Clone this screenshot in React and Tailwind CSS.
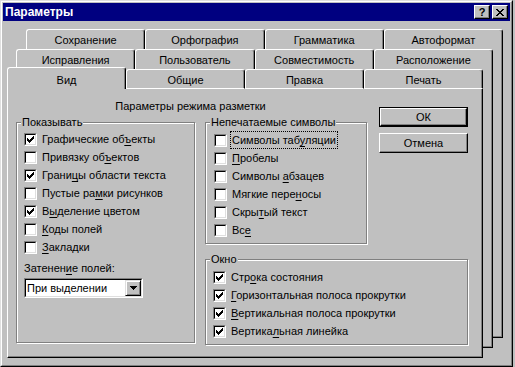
import React from "react";

function Mn({ text }) {
  const i = text.indexOf("&");
  if (i < 0) return <>{text}</>;
  return (
    <>
      {text.slice(0, i)}
      <span className="underline underline-offset-[2px] decoration-1">{text[i + 1]}</span>
      {text.slice(i + 2)}
    </>
  );
}

function CheckMark() {
  return (
    <svg width="7" height="7" viewBox="0 0 7 7" shapeRendering="crispEdges">
      <rect x="6" y="0" width="1" height="1" fill="#000" />
      <rect x="5" y="1" width="2" height="1" fill="#000" />
      <rect x="0" y="2" width="1" height="1" fill="#000" />
      <rect x="4" y="2" width="3" height="1" fill="#000" />
      <rect x="0" y="3" width="2" height="1" fill="#000" />
      <rect x="3" y="3" width="3" height="1" fill="#000" />
      <rect x="0" y="4" width="5" height="1" fill="#000" />
      <rect x="1" y="5" width="3" height="1" fill="#000" />
      <rect x="2" y="6" width="1" height="1" fill="#000" />
    </svg>
  );
}

function Check({ checked }) {
  return (
    <div className="w-[13px] h-[13px] shrink-0 border border-t-[#808080] border-l-[#808080] border-b-white border-r-white">
      <div className="w-full h-full border border-t-black border-l-black border-b-[#dfdfdf] border-r-[#dfdfdf] bg-white flex items-center justify-center">
        {checked && <CheckMark />}
      </div>
    </div>
  );
}

function Row({ label, checked, focus }) {
  return (
    <div className="flex items-center h-[18px]">
      <Check checked={checked} />
      <span
        className={
          focus
            ? "ml-[5px] leading-[14px] whitespace-nowrap outline outline-1 outline-dotted outline-black outline-offset-1"
            : "ml-[5px] leading-[14px] whitespace-nowrap"
        }
      >
        <Mn text={label} />
      </span>
    </div>
  );
}

function Group({ title, className, children }) {
  return (
    <div
      className={
        "relative border border-[#808080] shadow-[1px_1px_0_#fff,inset_1px_1px_0_#fff] " +
        className
      }
    >
      <span className="absolute left-[4px] -top-[8px] bg-[#c0c0c0] px-[1px] leading-[14px] whitespace-nowrap">
        {title}
      </span>
      {children}
    </div>
  );
}

function Tab({ label, selected, front }) {
  if (front && selected) {
    return (
      <div className="flex-1 h-[22px] flex justify-center pt-[5px] leading-[14px] border-t border-l border-r border-t-white border-l-white border-r-black rounded-t-[3px] shadow-[inset_-1px_0_0_#808080] bg-[#c0c0c0]">
        {label}
      </div>
    );
  }
  if (front) {
    return (
      <div className="flex-1 h-[20px] mt-[2px] flex justify-center pt-[3px] leading-[14px] border-t border-l border-r border-b border-t-white border-l-white border-r-black border-b-white rounded-t-[3px] shadow-[inset_-1px_0_0_#808080] bg-[#c0c0c0]">
        {label}
      </div>
    );
  }
  return (
    <div className="flex-1 h-[20px] flex justify-center pt-[3px] leading-[14px] border-t border-l border-r border-t-white border-l-white border-r-black rounded-t-[3px] shadow-[inset_-1px_0_0_#808080] bg-[#c0c0c0]">
      {label}
    </div>
  );
}

function Button({ label, isDefault }) {
  if (isDefault) {
    return (
      <div className="w-[89px] h-[20px] border border-black">
        <div className="w-full h-full flex items-center justify-center leading-[14px] border border-t-white border-l-white border-r-black border-b-black shadow-[inset_-1px_-1px_0_#808080]">
          {label}
        </div>
      </div>
    );
  }
  return (
    <div className="w-[89px] h-[20px] flex items-center justify-center leading-[14px] border border-t-white border-l-white border-r-black border-b-black shadow-[inset_-1px_-1px_0_#808080]">
      {label}
    </div>
  );
}

const show = [
  ["Графические об&ъекты", true],
  ["Привязку об&ъектов", false],
  ["Грани&цы области текста", true],
  ["Пустые ра&мки рисунков", false],
  ["В&ыделение цветом", true],
  ["&Коды полей", false],
  ["&Закладки", false],
];

const nonprint = [
  "Символы таб&уляции",
  "&Пробелы",
  "Символы &абзацев",
  "Мягкие пере&носы",
  "Скры&тый текст",
  "Вс&е",
];

const windowOpts = [
  "Стр&ока состояния",
  "&Горизонтальная полоса прокрутки",
  "&Вертикальная полоса прокрутки",
  "Вертика&льная линейка",
];

export default function App() {
  return (
    <div className="w-[515px] h-[367px] bg-[#c0c0c0] text-black text-[11px] font-['Liberation_Sans',Arial,sans-serif] overflow-hidden">
      <div className="w-[513px] h-[367px] flex flex-col border border-t-[#dfdfdf] border-l-[#dfdfdf] border-r-black border-b-black">
        <div className="flex-1 flex flex-col border border-t-white border-l-white border-r-[#808080] border-b-[#808080] p-[1px]">
          {/* Title bar */}
          <div className="h-[18px] shrink-0 bg-[#000080] flex items-center pl-[2px] pr-[2px]">
            <span className="text-white font-bold text-[12px] leading-[14px]">
              Параметры
            </span>
            <div className="ml-auto flex gap-[2px]">
              <div className="w-[16px] h-[14px] flex items-center justify-center bg-[#c0c0c0] border border-t-white border-l-white border-r-black border-b-black shadow-[inset_-1px_-1px_0_#808080] font-bold text-[11px] leading-[11px]">
                ?
              </div>
              <div className="w-[16px] h-[14px] flex items-center justify-center bg-[#c0c0c0] border border-t-white border-l-white border-r-black border-b-black shadow-[inset_-1px_-1px_0_#808080]">
                <svg width="8" height="7" viewBox="0 0 8 7" shapeRendering="crispEdges">
                  <path d="M0 0h2v1h-2zM6 0h2v1h-2zM1 1h2v1h-2zM5 1h2v1h-2zM2 2h4v1h-4zM3 3h2v1h-2zM2 4h4v1h-4zM1 5h2v1h-2zM5 5h2v1h-2zM0 6h2v1h-2zM6 6h2v1h-2z" fill="#000" />
                </svg>
              </div>
            </div>
          </div>

          {/* Stacked tab sheets */}
          <div className="flex-1 grid">
            {/* Back sheet */}
            <div className="[grid-area:1/1] ml-[23px] mt-[8px] w-[477px] h-[309px] flex flex-col">
              <div className="flex h-[20px]">
                <Tab label="Сохранение" />
                <Tab label="Орфография" />
                <Tab label="Грамматика" />
                <Tab label="Автоформат" />
              </div>
              <div className="flex-1 border-l border-r border-b border-l-white border-r-black border-b-black shadow-[inset_-1px_-1px_0_#808080]" />
            </div>

            {/* Middle sheet */}
            <div className="[grid-area:1/1] ml-[13px] mt-[28px] w-[477px] h-[299px] flex flex-col">
              <div className="flex h-[20px]">
                <Tab label="Исправления" />
                <Tab label="Пользователь" />
                <Tab label="Совместимость" />
                <Tab label="Расположение" />
              </div>
              <div className="flex-1 bg-[#c0c0c0] border-l border-r border-b border-l-white border-r-black border-b-black shadow-[inset_-1px_-1px_0_#808080]" />
            </div>

            {/* Front sheet */}
            <div className="[grid-area:1/1] ml-[4px] mt-[46px] w-[476px] h-[291px] flex flex-col">
              <div className="flex h-[22px]">
                <Tab label="Вид" front selected />
                <Tab label="Общие" front />
                <Tab label="Правка" front />
                <Tab label="Печать" front />
              </div>
              <div className="flex-1 bg-[#c0c0c0] border-l border-r border-b border-l-white border-r-black border-b-black shadow-[inset_-1px_-1px_0_#808080] pl-[8px] pt-[10px]">
                <div className="grid grid-cols-[179px_164px_89px] grid-rows-[23px_122px_101px] gap-x-[10px]">
                  <div className="col-start-1 col-span-2 row-start-1 text-center leading-[14px] pr-[4px]">
                    Параметры режима разметки
                  </div>
                  <div className="col-start-3 row-start-1 row-span-2 flex flex-col gap-[6px] pt-[8px]">
                    <Button label="ОК" isDefault />
                    <Button label="Отмена" />
                  </div>

                  <Group title="Показывать" className="col-start-1 row-start-2 row-span-2 h-[221px] self-start pl-[7px] pt-[7px]">
                    <div className="flex flex-col">
                      {show.map(([l, c]) => (
                        <Row key={l} label={l} checked={c} />
                      ))}
                    </div>
                    <div className="mt-[5px] leading-[14px]">
                      <Mn text="Затенен&ие полей:" />
                    </div>
                    <div className="mt-[3px] w-[119px] h-[20px] border border-t-[#808080] border-l-[#808080] border-b-white border-r-white">
                      <div className="w-full h-full flex items-center border border-t-black border-l-black border-b-[#dfdfdf] border-r-[#dfdfdf] bg-white">
                        <span className="pl-[1px] leading-[14px] flex-1">При выделении</span>
                        <div className="w-[16px] h-full flex items-center justify-center bg-[#c0c0c0] border border-t-[#dfdfdf] border-l-[#dfdfdf] border-r-black border-b-black shadow-[inset_1px_1px_0_#fff,inset_-1px_-1px_0_#808080]">
                          <svg width="7" height="4" viewBox="0 0 7 4" shapeRendering="crispEdges">
                            <path d="M0 0h7v1h-7zM1 1h5v1h-5zM2 2h3v1h-3zM3 3h1v1h-1z" fill="#000" />
                          </svg>
                        </div>
                      </div>
                    </div>
                  </Group>

                  <Group title="Непечатаемые символы" className="col-start-2 row-start-2 w-[162px] h-[122px] self-start pl-[8px] pt-[8px]">
                    {nonprint.map((l, i) => (
                      <Row key={l} label={l} checked={false} focus={i === 0} />
                    ))}
                  </Group>

                  <Group title="Окно" className="col-start-2 col-span-2 row-start-3 mt-[15px] w-[263px] h-[86px] self-start pl-[7px] pt-[8px]">
                    {windowOpts.map((l) => (
                      <Row key={l} label={l} checked />
                    ))}
                  </Group>
                </div>
              </div>
            </div>
          </div>
        </div>
      </div>
    </div>
  );
}
